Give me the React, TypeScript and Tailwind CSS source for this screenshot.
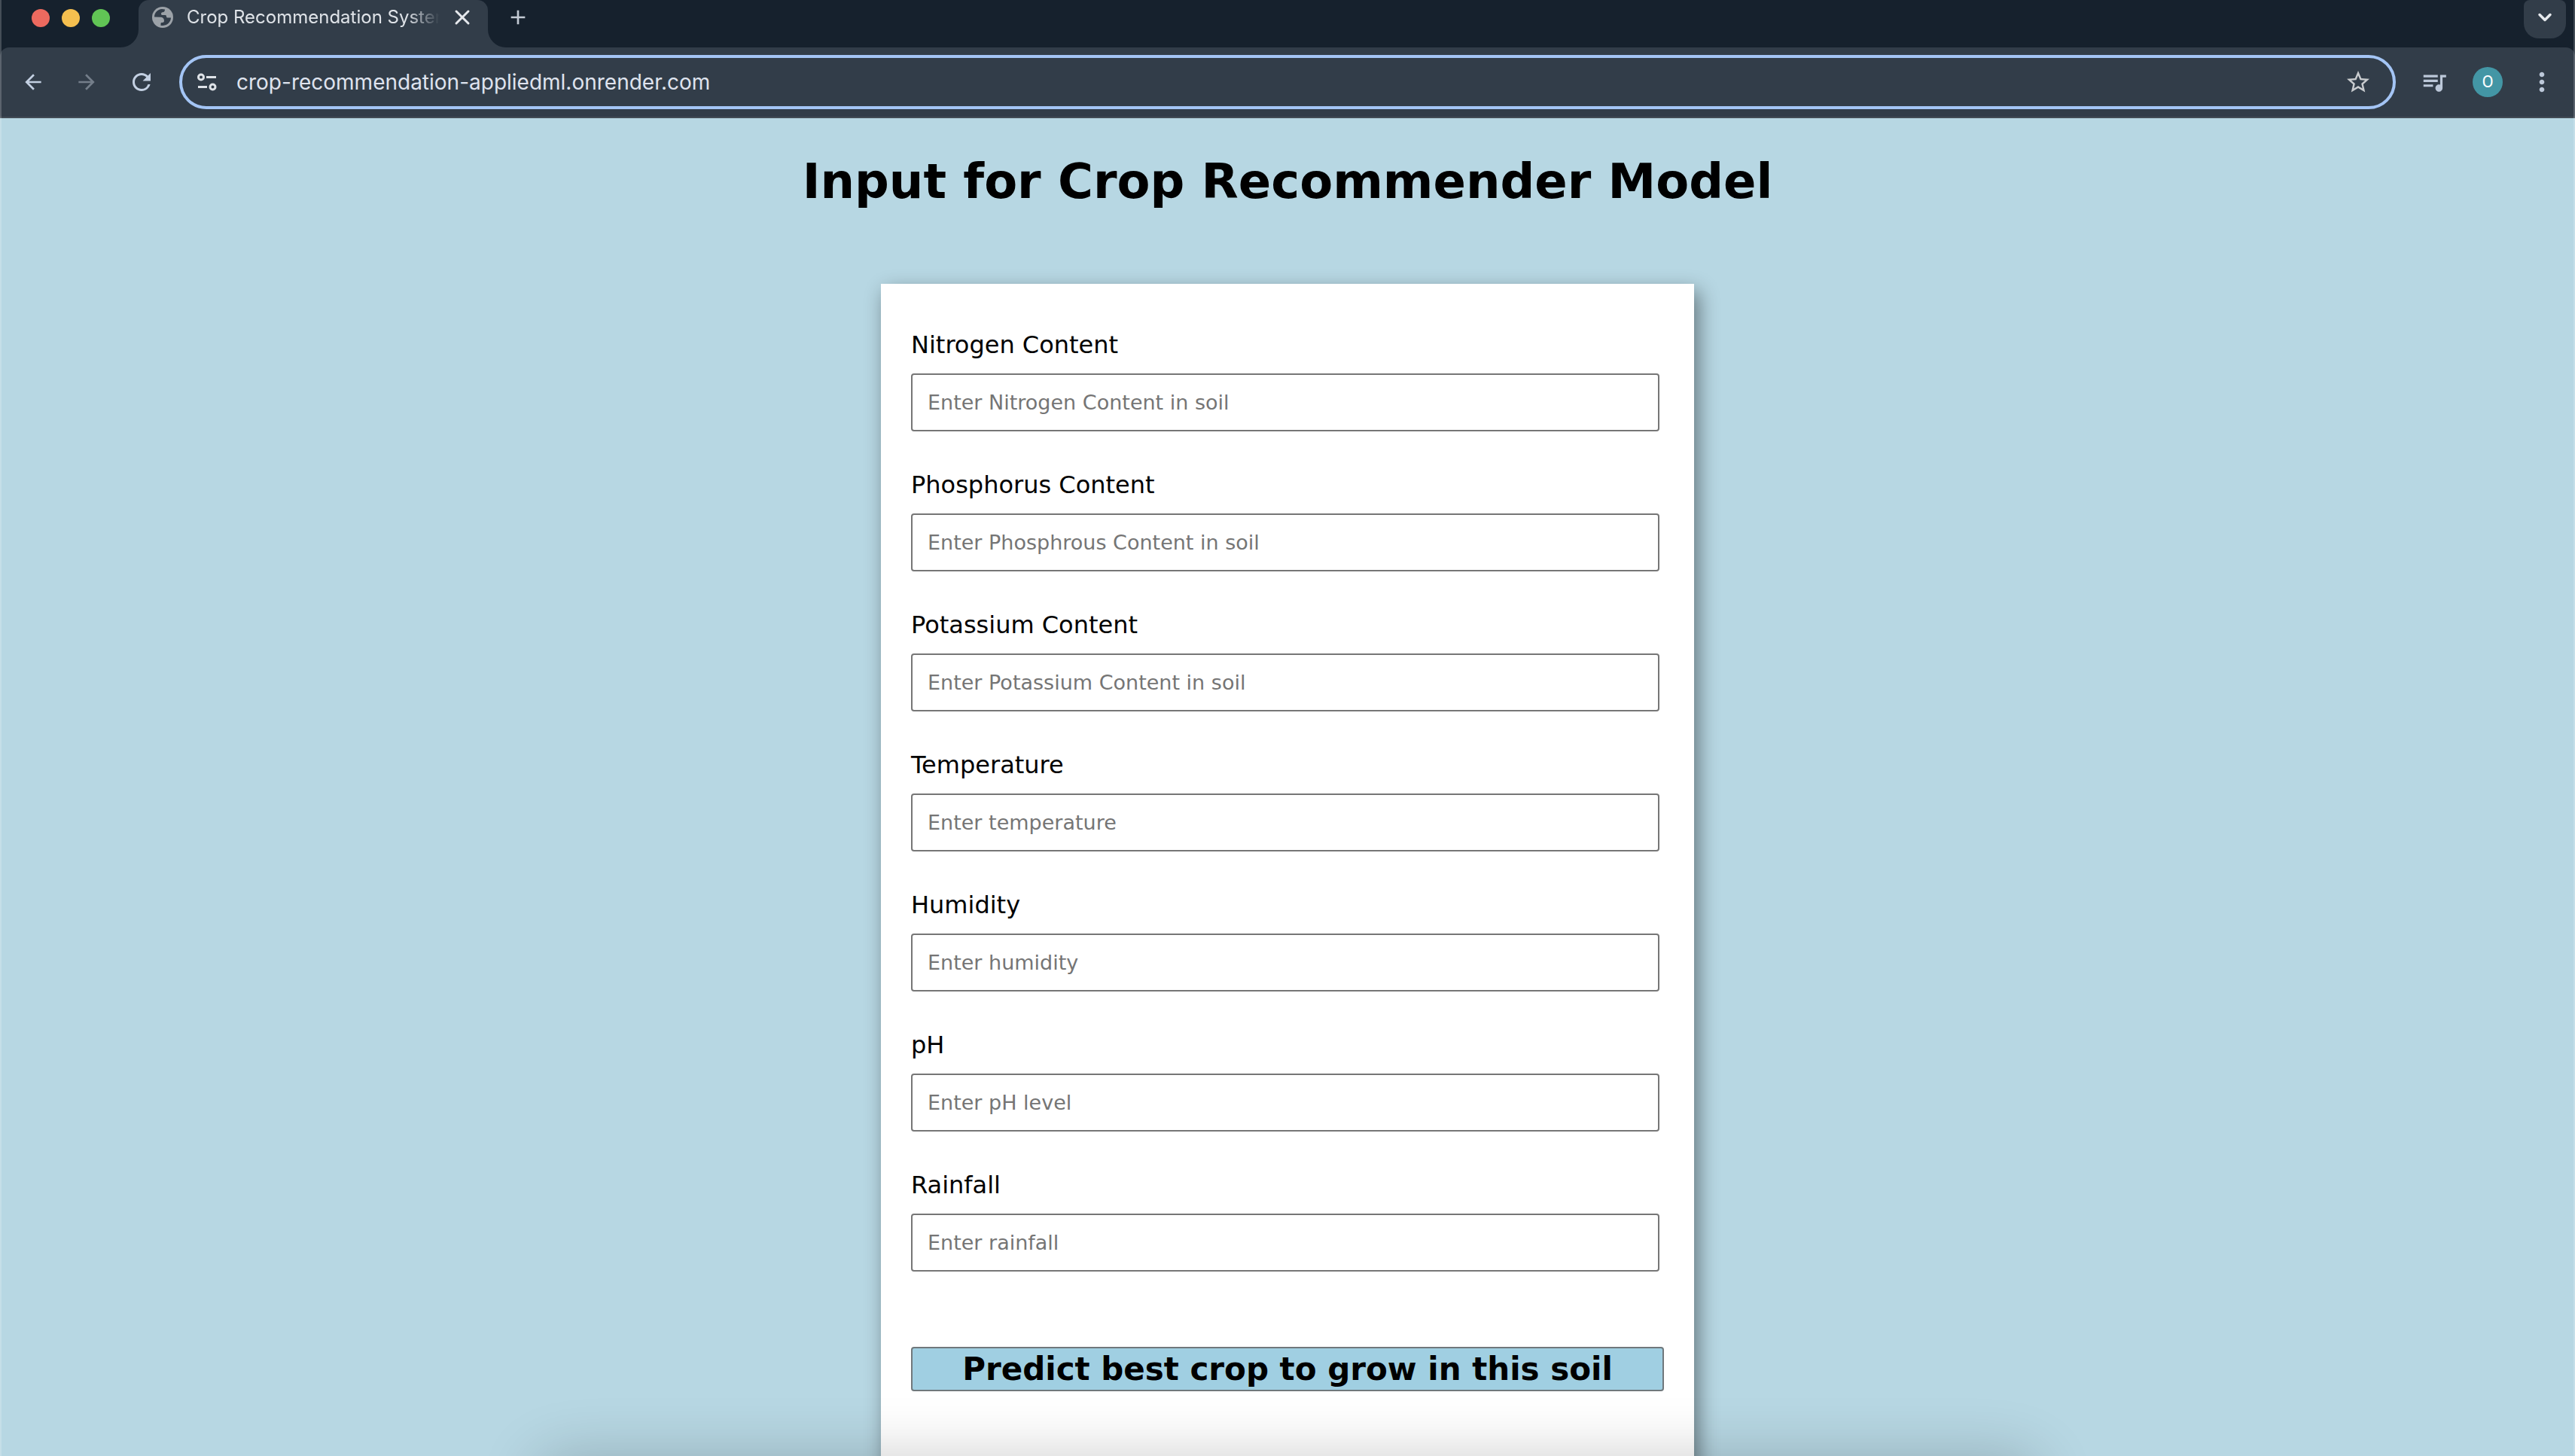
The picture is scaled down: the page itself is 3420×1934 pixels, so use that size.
import React from "react";
import { MdArrowBack, MdArrowForward, MdRefresh, MdAdd, MdStarBorder, MdQueueMusic, MdMoreVert } from "react-icons/md";
import { ChevronDown, X } from "lucide-react";

const fields = [
  { id: "nitrogen", label: "Nitrogen Content", placeholder: "Enter Nitrogen Content in soil" },
  { id: "phosphorus", label: "Phosphorus Content", placeholder: "Enter Phosphrous Content in soil" },
  { id: "potassium", label: "Potassium Content", placeholder: "Enter Potassium Content in soil" },
  { id: "temperature", label: "Temperature", placeholder: "Enter temperature" },
  { id: "humidity", label: "Humidity", placeholder: "Enter humidity" },
  { id: "ph", label: "pH", placeholder: "Enter pH level" },
  { id: "rainfall", label: "Rainfall", placeholder: "Enter rainfall" },
];

function TuneIcon() {
  return (
    <svg viewBox="0 0 26 24" className="h-6 w-[26px] shrink-0" fill="none" stroke="#dfe3e8" strokeWidth="3" aria-hidden="true">
      <circle cx="5" cy="5.5" r="3.5" />
      <path d="M12 5.5H25M1 18.5H13" />
      <circle cx="20.5" cy="18.5" r="3.5" />
    </svg>
  );
}

function GlobeIcon() {
  return (
    <svg viewBox="0 0 28 28" className="size-7 shrink-0" aria-hidden="true">
      <circle cx="14" cy="14" r="14" fill="#9ca2a8" />
      <path
        d="M3 13.5C3 8 7.5 3.3 13 3L17 3.5C17 6 16 7 14 7.2C12.500 7.400 12 8.200 12 9.500C12 10.800 13 11 14.500 11H17.500C18.500 11 19 11.800 19 13C19 14.200 19.800 14.600 21 14.600H25C24.800 20 20.500 24.800 14.500 25H11.500V22.500C11.500 21.300 12.200 21 13.500 21C15.500 21 16 20 16 18.500C16 15.500 14 13.800 11 13.800Z"
        fill="#323d49"
      />
    </svg>
  );
}

/* Concave curve that joins the foot of the active tab to the toolbar. */
function TabFoot({ flip = false }: { flip?: boolean }) {
  return (
    <svg viewBox="0 0 24 24" className={flip ? "size-6 -scale-x-100" : "size-6"} aria-hidden="true">
      <path d="M24 0V24H0A24 24 0 0 0 24 0Z" fill="#323d49" />
    </svg>
  );
}

function TabStrip() {
  return (
    <div className="flex h-[63px] items-start bg-[#16212d]">
      <div className="flex h-12 w-40 items-center gap-4 pl-[42px]">
        <button aria-label="Close window" className="size-6 rounded-full bg-[#ed6a5f]" />
        <button aria-label="Minimize window" className="size-6 rounded-full bg-[#f5bf4f]" />
        <button aria-label="Zoom window" className="size-6 rounded-full bg-[#61c555]" />
      </div>
      <div className="flex items-end self-stretch">
        <TabFoot />
        <div className="flex w-[464px] items-center self-stretch rounded-t-[14px] bg-[#323d49] px-[18px] pb-[17px]">
          <GlobeIcon />
          <span className="ml-[18px] w-[336px] overflow-hidden whitespace-nowrap text-[24px] leading-8 text-[#dfe3e8] [mask-image:linear-gradient(to_right,black_87%,transparent)]">
            Crop Recommendation System
          </span>
          <button aria-label="Close tab" className="ml-auto">
            <X className="size-8 text-[#e6e9ed]" strokeWidth={2.25} />
          </button>
        </div>
        <TabFoot flip />
      </div>
      <button aria-label="New tab" className="flex h-[46px] items-center">
        <MdAdd className="size-8 text-[#c3cad4]" />
      </button>
      <button aria-label="Search tabs" className="ml-auto mr-3 flex h-[51px] w-14 items-center justify-center rounded-b-[20px] rounded-t-lg bg-[#323d49] pb-1.5">
        <ChevronDown className="size-7 text-[#e6e9ed]" strokeWidth={3} />
      </button>
    </div>
  );
}

function Toolbar() {
  return (
    <div className="bg-[#16212d]">
      <div className="flex h-[94px] items-center rounded-t-[12px] border-b-2 border-[#424c55] bg-[#323d49]">
        <div className="flex w-[238px] shrink-0 items-center gap-[39px] pl-7">
          <button aria-label="Back"><MdArrowBack className="size-8 text-[#c3d0e2]" /></button>
          <button aria-label="Forward"><MdArrowForward className="size-8 text-[#747e8a]" /></button>
          <button aria-label="Reload"><MdRefresh className="size-9 text-[#c3d0e2]" /></button>
        </div>
        <div className="flex h-[72px] flex-1 items-center rounded-full border-4 border-[#a4c5f5] pl-5 pr-7">
          <TuneIcon />
          <input
            aria-label="Address"
            defaultValue="crop-recommendation-appliedml.onrender.com"
            className="ml-[26px] min-w-0 flex-1 bg-transparent text-[28px] leading-9 text-[#dfe3ee] outline-none"
          />
          <button aria-label="Bookmark this page">
            <MdStarBorder className="size-9 text-[#c9cccf]" />
          </button>
        </div>
        <div className="flex shrink-0 items-center pl-8 pr-6">
          <button aria-label="Media controls">
            <MdQueueMusic className="size-[38px] text-[#bcc8d9]" />
          </button>
          <button aria-label="Profile" className="ml-8 size-10 rounded-full bg-[#4396a5] font-['Roboto',sans-serif] text-[22px] leading-10 text-white">O</button>
          <button aria-label="Menu" className="ml-8"><MdMoreVert className="size-10 text-[#bcc8d9]" /></button>
        </div>
      </div>
    </div>
  );
}

export default function App() {
  return (
    <div className="relative flex h-screen flex-col overflow-hidden bg-[#b7d7e3] font-['Inter',sans-serif]">
      <header>
        <TabStrip />
        <Toolbar />
      </header>
      <main className="flex-1 pt-11 font-['DejaVu_Sans',sans-serif] text-black">
        <h1 className="text-center text-[64px] font-bold leading-20">Input for Crop Recommender Model</h1>
        <form className="mx-auto mt-24 w-[1080px] bg-white px-10 pb-40 pt-[57px] shadow-[6px_10px_25px_rgba(0,0,0,0.45)]">
          <div className="flex flex-col gap-[47px]">
            {fields.map((f) => (
              <div key={f.id} className="flex flex-col gap-3.5">
                <label htmlFor={f.id} className="text-[32px] leading-12">{f.label}</label>
                <input
                  id={f.id}
                  name={f.id}
                  type="text"
                  placeholder={f.placeholder}
                  className="mr-1.5 h-[77px] rounded-[4px] border-2 border-[#767676] bg-white px-5 text-[27px] outline-none placeholder:text-[#757575]"
                />
              </div>
            ))}
          </div>
          <button type="submit" className="mt-[100px] h-[59px] w-full rounded-[4px] border-2 border-[#70787c] bg-[#a0cfe2] text-[42px] font-bold leading-[52px]">
            Predict best crop to grow in this soil
          </button>
        </form>
      </main>
      {/* Soft shadow cast from below the bottom edge, and the window's hairline rim. */}
      <div className="pointer-events-none absolute inset-x-[710px] -bottom-20 h-20 rounded-[40px] shadow-[0_0_80px_rgba(0,0,0,0.2)]" />
      <div className="pointer-events-none absolute inset-0 border-x-2 border-white/20" />
    </div>
  );
}
